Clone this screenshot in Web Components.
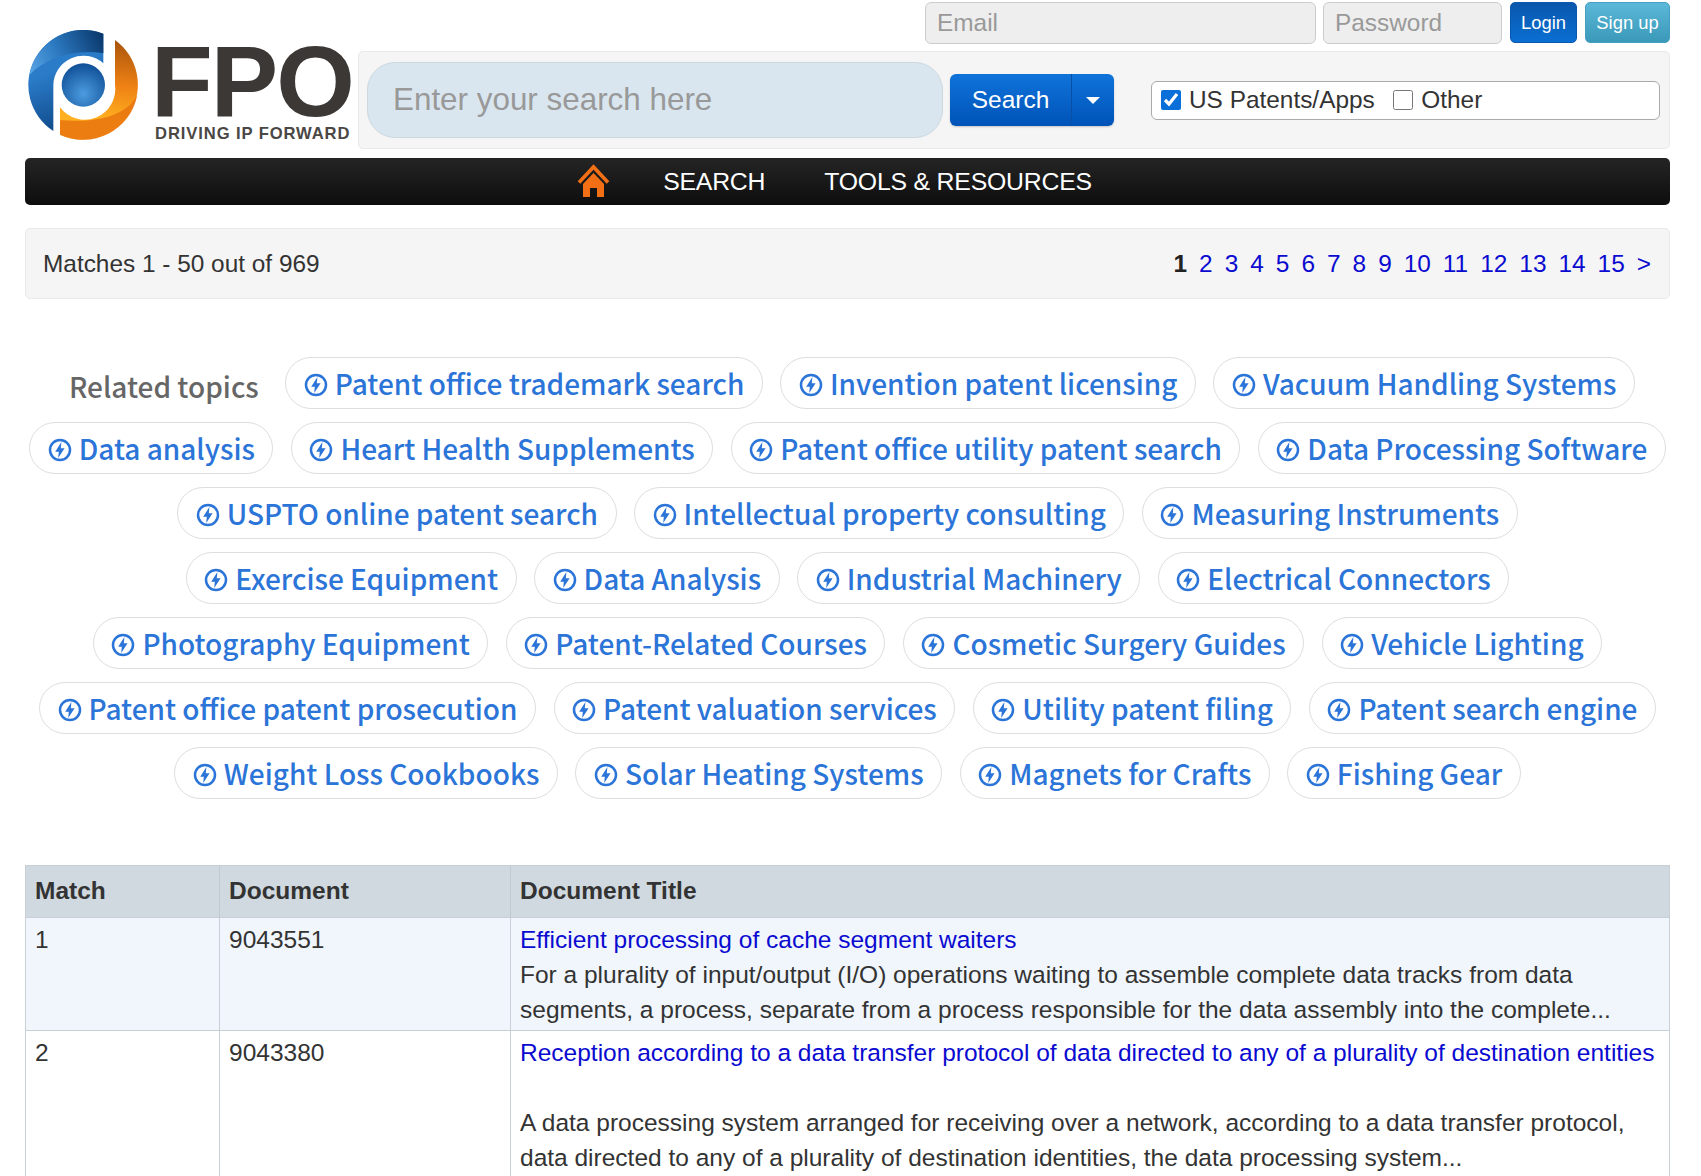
<!DOCTYPE html>
<html lang="en">
<head>
<meta charset="utf-8">
<title>FPO search results</title>
<style>
	html, body { margin: 0; height: 100%; overflow: hidden; background: #fff; }
	body { font-family: "Liberation Sans", Arial, sans-serif; color: #333; }
	#page { display: block; padding: 0 31px 0 25px; }
</style>
</head>
<body>
<div id="page">
	<fpo-header></fpo-header>
	<fpo-nav></fpo-nav>
	<fpo-pager total="969" pages="15"></fpo-pager>
	<topic-cloud>
		<topic-chip>Patent office trademark search</topic-chip>
		<topic-chip>Invention patent licensing</topic-chip>
		<topic-chip>Vacuum Handling Systems</topic-chip>
		<topic-chip>Data analysis</topic-chip>
		<topic-chip>Heart Health Supplements</topic-chip>
		<topic-chip>Patent office utility patent search</topic-chip>
		<topic-chip>Data Processing Software</topic-chip>
		<topic-chip>USPTO online patent search</topic-chip>
		<topic-chip>Intellectual property consulting</topic-chip>
		<topic-chip>Measuring Instruments</topic-chip>
		<topic-chip>Exercise Equipment</topic-chip>
		<topic-chip>Data Analysis</topic-chip>
		<topic-chip>Industrial Machinery</topic-chip>
		<topic-chip>Electrical Connectors</topic-chip>
		<topic-chip>Photography Equipment</topic-chip>
		<topic-chip>Patent-Related Courses</topic-chip>
		<topic-chip>Cosmetic Surgery Guides</topic-chip>
		<topic-chip>Vehicle Lighting</topic-chip>
		<topic-chip>Patent office patent prosecution</topic-chip>
		<topic-chip>Patent valuation services</topic-chip>
		<topic-chip>Utility patent filing</topic-chip>
		<topic-chip>Patent search engine</topic-chip>
		<topic-chip>Weight Loss Cookbooks</topic-chip>
		<topic-chip>Solar Heating Systems</topic-chip>
		<topic-chip>Magnets for Crafts</topic-chip>
		<topic-chip>Fishing Gear</topic-chip>
	</topic-cloud>
	<results-table>
		<result-row match="1" doc="9043551" tint>
			<a slot="title">Efficient processing of cache segment waiters</a>
			For a plurality of input/output (I/O) operations waiting to assemble complete data tracks from data segments, a process, separate from a process responsible for the data assembly into the complete...
		</result-row>
		<result-row match="2" doc="9043380" gap>
			<a slot="title">Reception according to a data transfer protocol of data directed to any of a plurality of destination entities</a>
			A data processing system arranged for receiving over a network, according to a data transfer protocol, data directed to any of a plurality of destination identities, the data processing system...
		</result-row>
	</results-table>
</div>

<script>
class FpoLogo extends HTMLElement {
	constructor() {
		super();
		this.attachShadow({mode: 'open'}).innerHTML = `
		<style>
			:host { display: flex; width: 333px; box-sizing: border-box; padding: 30px 0 0 3px; align-items: flex-start; }
			svg { width: 111px; height: 110px; flex: none; }
			.word { margin: 0 0 0 12px; width: 198px; display: flex; flex-direction: column; color: #3b3835; font-weight: bold; }
			.fpo { font-size: 101px; line-height: 73px; letter-spacing: -1.9px; margin-top: 15px; height: 73px; }
			.tag { font-family: "Liberation Sans", sans-serif; font-size: 16.6px; line-height: 14px; margin: 9px 0 0 4px; white-space: nowrap; letter-spacing: .9px; color: #4a4744; }
		</style>
		<svg viewBox="24 30 333 330" aria-hidden="true">
			<defs>
				<linearGradient id="b" x1="60" y1="170" x2="120" y2="330" gradientUnits="userSpaceOnUse">
					<stop offset="0" stop-color="#2a7bc8"/><stop offset="1" stop-color="#104a8a"/>
				</linearGradient>
				<linearGradient id="c" x1="30" y1="170" x2="250" y2="60" gradientUnits="userSpaceOnUse">
					<stop offset="0" stop-color="#5aa6e6"/><stop offset=".45" stop-color="#2b78c0"/><stop offset="1" stop-color="#0b3a6e"/>
				</linearGradient>
				<linearGradient id="o" x1="290" y1="60" x2="260" y2="300" gradientUnits="userSpaceOnUse">
					<stop offset="0" stop-color="#a9540c"/><stop offset=".55" stop-color="#ee8114"/><stop offset="1" stop-color="#ffb020"/>
				</linearGradient>
				<radialGradient id="d" cx=".5" cy=".7" r=".7">
					<stop offset="0" stop-color="#4c9be0"/><stop offset="1" stop-color="#0f4f96"/>
				</radialGradient>
			</defs>
			<path fill="url(#b)" d="M250 41V130A90 90 0 0 0 100 195V333A165 165 0 0 1 250 41Z"/>
			<path fill="url(#c)" d="M250 41V100C170 85 80 110 28 165A165 165 0 0 1 250 41Z"/>
			<path fill="url(#o)" d="M285 60A165 165 0 0 1 120 344V262A92 92 0 0 0 285 195Z"/>
			<path fill="#e66e0c" opacity=".75" d="M120 344A165 165 0 0 0 352 225C320 290 220 310 120 300Z"/>
			<circle cx="190" cy="195" r="65" fill="url(#d)"/>
		</svg>
		<div class="word"><span class="fpo">FPO</span><span class="tag">DRIVING IP FORWARD</span></div>`;
	}
}

class FpoHeader extends HTMLElement {
	constructor() {
		super();
		this.attachShadow({mode: 'open'}).innerHTML = `
		<style>
			:host { display: flex; align-items: flex-start; }
			.side { flex: 1; min-width: 0; }
			.login { display: flex; justify-content: flex-end; gap: 7px; padding-top: 2px; height: 42px; margin-bottom: 7px; font-size: 24.4px; }
			input { font: inherit; box-sizing: border-box; }
			.login input { height: 42px; background: #eee; border: 1px solid #ccc; border-radius: 6px; padding: 0 11px; }
			.login input::placeholder, .q::placeholder { color: #999; opacity: 1; }
			.email { width: 391px; }
			.pass { width: 179px; margin-right: 1px; }
			.login button { font: 18.4px "Liberation Sans", sans-serif; height: 41px; color: #fff; border: 1px solid #0a58ae; border-radius: 5px; padding: 0; }
			.in { width: 67px; background: linear-gradient(#0a57ac, #0a6fd2); }
			.up { width: 85px; background: linear-gradient(#5bb8d8, #3a98b8); border-color: #45a0bf !important; margin-left: 1px; }
			.panel { display: flex; align-items: center; height: 98px; box-sizing: border-box; background: #f5f5f5; border: 1px solid #e9e9e9; border-radius: 5px; padding: 0 9px 0 8px; }
			.q { width: 576px; height: 76px; background: #d9e6ef; border: 1px solid #ccd8e0; border-radius: 28px; padding: 0 25px; font-size: 31.4px; color: #555; }
			.split { display: flex; margin-left: 7px; height: 52px; border-radius: 6px; overflow: hidden; color: #fff; background: linear-gradient(#0f73da, #0053b8); box-shadow: 0 1px 2px rgba(0,0,0,.2); }
			.split button { font: 24.5px "Liberation Sans", sans-serif; color: #fff; background: none; border: 0; padding: 0; }
			.go { width: 121px; }
			.more { width: 43px; border-left: 1px solid #0a4fa6 !important; display: flex; align-items: center; justify-content: center; }
			.more i { width: 0; height: 0; border: 7px solid transparent; border-top: 7px solid #fff; border-bottom: 0; }
			.scope { display: flex; align-items: center; margin-left: 37px; flex: 1; height: 37px; background: #fff; border: 1px solid #aaa; border-radius: 6px; font-size: 24.4px; padding: 0 9px; }
			label { display: flex; align-items: center; gap: 8px; margin-right: 18.5px; }
			.scope input { width: 20px; height: 20px; margin: 0; accent-color: #0a6fd8; }
		</style>
		<fpo-logo></fpo-logo>
		<div class="side">
			<div class="login">
				<input class="email" placeholder="Email">
				<input class="pass" placeholder="Password">
				<button class="in">Login</button>
				<button class="up">Sign up</button>
			</div>
			<div class="panel">
				<input class="q" placeholder="Enter your search here">
				<div class="split"><button class="go">Search</button><button class="more" aria-label="More"><i></i></button></div>
				<div class="scope">
					<label><input type="checkbox" checked>US Patents/Apps</label>
					<label><input type="checkbox">Other</label>
				</div>
			</div>
		</div>`;
	}
}

class FpoNav extends HTMLElement {
	constructor() {
		super();
		this.attachShadow({mode: 'open'}).innerHTML = `
		<style>
			:host { display: flex; align-items: center; justify-content: center; gap: 59px; height: 47px; margin-top: 9px; padding-right: 26px; border-radius: 5px; background: linear-gradient(#252525, #0d0d0d); color: #fff; font-size: 24.8px; letter-spacing: -.2px; }
			svg { width: 33px; height: 34px; margin-right: -6px; margin-bottom: 2px; }
		</style>
		<svg viewBox="0 0 33 34" aria-hidden="true">
			<path fill="none" stroke="#f36f16" stroke-width="3.6" d="M2 18.5L16.5 3 31 18.5"/>
			<path fill="#f36f16" d="M16.5 9L27 20V33H20V24H13V33H6V20Z"/>
		</svg>
		<span>SEARCH</span>
		<span>TOOLS &amp; RESOURCES</span>`;
	}
}

class FpoPager extends HTMLElement {
	connectedCallback() {
		const pages = Number(this.getAttribute('pages'));
		let links = '<b>1</b>';
		for (let i = 2; i <= pages; i++) links += `<a>${i}</a>`;
		this.attachShadow({mode: 'open'}).innerHTML = `
		<style>
			:host { display: flex; align-items: center; justify-content: space-between; height: 71px; box-sizing: border-box; margin-top: 23px; padding: 0 18px 0 17px; background: #f5f5f5; border: 1px solid #e9e9e9; border-radius: 5px; font-size: 24.4px; }
			nav { display: flex; gap: 12px; }
			a { color: #0a0ad0; }
			b { color: #222; }
		</style>
		<span>Matches 1 - 50 out of ${this.getAttribute('total')}</span>
		<nav>${links}<a>&gt;</a></nav>`;
	}
}

class TopicCloud extends HTMLElement {
	constructor() {
		super();
		this.attachShadow({mode: 'open'}).innerHTML = `
		<style>
			:host { display: flex; flex-wrap: wrap; justify-content: center; gap: 13px 17.5px; margin-top: 58px; font-family: "Noto Sans CJK SC", "Noto Sans", sans-serif; font-size: 28px; font-weight: 500; }
			.label { color: #666; display: flex; align-items: center; height: 52px; padding: 5px 9px 0 9px; box-sizing: border-box; line-height: 1; }
		</style>
		<span class="label">Related topics</span>
		<slot></slot>`;
	}
}

class TopicChip extends HTMLElement {
	constructor() {
		super();
		this.attachShadow({mode: 'open'}).innerHTML = `
		<style>
			:host { display: inline-flex; align-items: center; gap: 7px; height: 52px; box-sizing: border-box; padding: 0 17.5px; border: 1px solid #dedede; border-radius: 26px; background: #fff; color: #2b74d8; white-space: nowrap; line-height: 1; }
			svg { width: 24px; height: 24px; flex: none; margin-top: 3px; }
		</style>
		<svg viewBox="0 0 24 24" aria-hidden="true">
			<circle cx="12" cy="12" r="10" fill="none" stroke="currentColor" stroke-width="2.5"/>
			<path fill="currentColor" d="M13.4 4L7.2 13.8H10.8L10.2 20 16.6 10.2H12.8Z"/>
		</svg>
		<slot></slot>`;
	}
}

class ResultsTable extends HTMLElement {
	constructor() {
		super();
		this.attachShadow({mode: 'open'}).innerHTML = `
		<style>
			:host { display: block; margin-top: 66px; border: 1px solid #c7d0d6; border-bottom: 0; font-size: 24.5px; color: #333; }
			.head { display: grid; grid-template-columns: 193px 291px 1fr; height: 51px; background: #d0d9df; font-weight: bold; }
			.head span { padding: 0 9px; line-height: 50px; border-left: 1px solid #c0cad0; }
			.head span:first-child { border-left: 0; }
		</style>
		<div class="head"><span>Match</span><span>Document</span><span>Document Title</span></div>
		<slot></slot>`;
	}
}

class ResultRow extends HTMLElement {
	connectedCallback() {
		this.attachShadow({mode: 'open'}).innerHTML = `
		<style>
			:host { display: grid; grid-template-columns: 193px 291px 1fr; line-height: 35px; border-top: 1px solid #c7d0d6; }
			:host([tint]) { background: #f0f6fc; }
			:host([gap]) .title { margin-bottom: 35px; }
			div { padding: 4px 9px 3px; }
			.cell { border-left: 1px solid #c7d0d6; }
			.title { color: #0a0ad0; }
		</style>
		<div>${this.getAttribute('match')}</div>
		<div class="cell">${this.getAttribute('doc')}</div>
		<div class="cell"><section class="title"><slot name="title"></slot></section><slot></slot></div>`;
	}
}

customElements.define('fpo-logo', FpoLogo);
customElements.define('fpo-header', FpoHeader);
customElements.define('fpo-nav', FpoNav);
customElements.define('fpo-pager', FpoPager);
customElements.define('topic-cloud', TopicCloud);
customElements.define('topic-chip', TopicChip);
customElements.define('results-table', ResultsTable);
customElements.define('result-row', ResultRow);
</script>
</body>
</html>
